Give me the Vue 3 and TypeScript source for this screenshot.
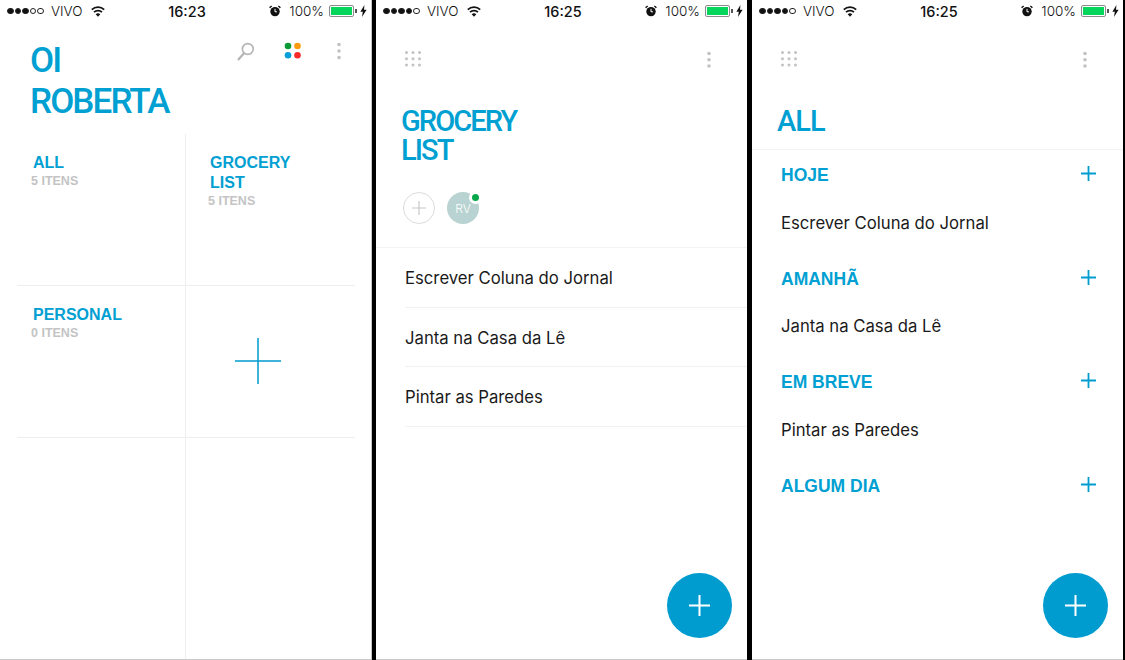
<script setup lang="ts">
type Screen = { kind: 'home' | 'list' | 'all'; time: string; signal: number }

const screens: Screen[] = [
  { kind: 'home', time: '16:23', signal: 3 },
  { kind: 'list', time: '16:25', signal: 4 },
  { kind: 'all', time: '16:25', signal: 4 }
]

const tasks = ['Escrever Coluna do Jornal', 'Janta na Casa da Lê', 'Pintar as Paredes']

const sections = [
  { title: 'HOJE', item: 'Escrever Coluna do Jornal' },
  { title: 'AMANHÃ', item: 'Janta na Casa da Lê' },
  { title: 'EM BREVE', item: 'Pintar as Paredes' },
  { title: 'ALGUM DIA', item: '' }
]

const gridDots = [0, 1, 2].flatMap((y) => [0, 1, 2].map((x) => ({ cx: 1.5 + x * 6.5, cy: 1.5 + y * 6.3 })))
</script>

<template>
  <div class="phones">
    <section v-for="s in screens" :key="s.kind" class="phone" :class="s.kind">
      <div class="status">
        <div class="status-left">
          <span class="signal">
            <i v-for="n in 5" :key="n" :class="{ on: n <= s.signal }"></i>
          </span>
          <span class="carrier">VIVO</span>
          <svg class="wifi" width="14" height="11" viewBox="0 0 14 11">
            <path d="M7 10.8 4.7 8.2a3.4 3.4 0 0 1 4.6 0z" fill="#111" />
            <path d="M3 6.2a5.8 5.8 0 0 1 8 0M.8 3.6a9 9 0 0 1 12.4 0" fill="none" stroke="#111" stroke-width="1.7" />
          </svg>
        </div>
        <span class="time">{{ s.time }}</span>
        <div class="status-right">
          <svg width="12" height="12" viewBox="0 0 12 12">
            <circle cx="6" cy="6.6" r="4.7" fill="#111" />
            <path d="M6 3.8v3h2" fill="none" stroke="#fff" stroke-width="1" />
            <path d="M.6 2.8 2.6 1M11.4 2.8 9.4 1" stroke="#111" stroke-width="1.4" />
          </svg>
          <span class="percent">100%</span>
          <span class="battery"><b></b></span>
          <svg width="7" height="12" viewBox="0 0 7 12">
            <path d="M4.4 0 .4 6.8h2.4L2 12l4.6-7.2H4z" fill="#111" />
          </svg>
        </div>
      </div>

      <template v-if="s.kind === 'home'">
        <header class="home-head">
          <h1 class="home-title">OI<br />ROBERTA</h1>
          <div class="home-icons">
            <svg width="18" height="19" viewBox="0 0 18 19">
              <circle cx="10.8" cy="7" r="5.4" fill="none" stroke="#b4b4b4" stroke-width="1.6" />
              <path d="M7.2 11 1 18" fill="none" stroke="#b4b4b4" stroke-width="2.2" />
            </svg>
            <svg width="18" height="18" viewBox="0 0 18 18">
              <circle cx="4" cy="4" r="3.3" fill="#0a9a34" />
              <circle cx="13.5" cy="4" r="3.3" fill="#fb9b0d" />
              <circle cx="4" cy="13.3" r="3.3" fill="#049fd8" />
              <circle cx="13.5" cy="13.3" r="3.3" fill="#fb2a2a" />
            </svg>
            <svg class="kebab home-kebab" width="6" height="18" viewBox="0 0 6 18">
              <circle cx="3" cy="2.5" r="1.8" />
              <circle cx="3" cy="9" r="1.8" />
              <circle cx="3" cy="15.6" r="1.8" />
            </svg>
          </div>
        </header>
        <div class="tiles">
          <div class="tile">
            <div class="tile-name">ALL</div>
            <div class="tile-count">5 ITENS</div>
          </div>
          <div class="tile">
            <div class="tile-name">GROCERY<br />LIST</div>
            <div class="tile-count">5 ITENS</div>
          </div>
          <div class="tile">
            <div class="tile-name">PERSONAL</div>
            <div class="tile-count">0 ITENS</div>
          </div>
          <div class="tile tile-add">
            <svg width="46" height="46" viewBox="0 0 46 46">
              <path d="M0 23h46M23 0v46" stroke="#009ccf" stroke-width="1.5" />
            </svg>
          </div>
          <div class="tile"></div>
          <div class="tile"></div>
        </div>
      </template>

      <template v-else>
        <div class="toolbar">
          <svg width="17" height="16" viewBox="0 0 17 16">
            <circle v-for="(d, i) in gridDots" :key="i" :cx="d.cx" :cy="d.cy" r="1.5" fill="#c2c2c2" />
          </svg>
          <svg class="kebab" width="6" height="18" viewBox="0 0 6 18">
            <circle cx="3" cy="2.5" r="1.8" />
            <circle cx="3" cy="8.8" r="1.8" />
            <circle cx="3" cy="15" r="1.8" />
          </svg>
        </div>

        <template v-if="s.kind === 'list'">
          <h1 class="list-title">GROCERY<br />LIST</h1>
          <div class="people">
            <span class="add-person">
              <svg width="14" height="14" viewBox="0 0 14 14">
                <path d="M0 7h14M7 0v14" stroke="#c8c8c8" stroke-width="1.2" />
              </svg>
            </span>
            <span class="avatar">RV<i class="online"></i></span>
          </div>
          <ul class="tasks">
            <li v-for="t in tasks" :key="t">{{ t }}</li>
          </ul>
        </template>

        <template v-else>
          <h1 class="all-title">ALL</h1>
          <div v-for="sec in sections" :key="sec.title" class="section">
            <div class="section-head">
              <span class="section-name">{{ sec.title }}</span>
              <svg width="15" height="15" viewBox="0 0 15 15">
                <path d="M0 7.5h15M7.5 0v15" stroke="#009ccf" stroke-width="1.8" />
              </svg>
            </div>
            <div v-if="sec.item" class="section-item">{{ sec.item }}</div>
          </div>
        </template>

        <button class="fab" type="button">
          <svg width="21" height="21" viewBox="0 0 21 21">
            <path d="M0 10.5h21M10.5 0v21" stroke="#fff" stroke-width="2" />
          </svg>
        </button>
      </template>
    </section>
  </div>
</template>

<style>
html,
body {
  margin: 0;
  background: #000;
}
</style>

<style scoped>
.phones {
  display: flex;
  width: 1125px;
  height: 660px;
  background: #000;
  overflow: hidden;
  font-family: "Liberation Sans", Arial, sans-serif;
}
.phone {
  position: relative;
  flex: none;
  width: 371px;
  height: 660px;
  box-sizing: border-box;
  background: #fff;
  display: flex;
  flex-direction: column;
  border-bottom: 1px solid #c9c9c9;
}
.phone.home { width: 372px; margin-right: 4px; border-right: 1px solid #c4c4c4; }
.phone.list { margin-right: 5px; }

.status {
  flex: none;
  height: 24px;
  display: grid;
  grid-template-columns: 1fr auto 1fr;
  align-items: center;
  padding: 0 4px 2px 7px;
  font-family: Inter, "Liberation Sans", sans-serif;
  font-size: 13.5px;
  color: #111;
  box-sizing: border-box;
}
.status-left,
.status-right {
  display: flex;
  align-items: center;
}
.status-right { justify-content: flex-end; }
.signal { display: flex; gap: 1px; }
.signal i {
  width: 6.6px;
  height: 6.6px;
  box-sizing: border-box;
  border: 0.7px solid #222;
  border-radius: 50%;
}
.signal i.on { background: #111; }
.carrier { margin-left: 7px; font-weight: 300; }
.wifi { margin-left: 9px; }
.time { font-size: 14.5px; font-weight: 500; }
.percent { margin: 0 5px 0 8px; font-weight: 300; }
.battery {
  display: block;
  position: relative;
  width: 25px;
  height: 12px;
  box-sizing: border-box;
  border: 1px solid #8c8c8c;
  border-radius: 2px;
  padding: 1px;
  margin-right: 6px;
}
.battery b {
  display: block;
  height: 100%;
  background: #07d65c;
}
.battery::after {
  content: "";
  position: absolute;
  right: -4px;
  top: 3px;
  width: 2px;
  height: 4px;
  background: #555;
}

.home-head {
  flex: none;
  height: 110px;
  display: flex;
  justify-content: space-between;
  padding: 16px 29px 0 30px;
  box-sizing: border-box;
}
h1 { margin: 0; color: #00a0d2; font-family: Roboto, sans-serif; font-weight: 500; }
.home-title {
  font-size: 35px;
  line-height: 41px;
  letter-spacing: -1.9px;
}
.home-icons {
  display: flex;
  gap: 29px;
  align-items: flex-start;
  padding-top: 2px;
}
.home-kebab { margin-left: 5px; }
.kebab { fill: #c2c2c2; }

.tiles {
  flex: 1;
  margin-left: 17px;
  width: 338px;
  display: grid;
  grid-template-columns: 169px 169px;
  grid-template-rows: 152px 152px 1fr;
}
.tile {
  box-sizing: border-box;
  padding: 19px 0 0 16px;
  border-bottom: 1px solid #eeeeee;
}
.tile:nth-child(odd) { border-right: 1px solid #eeeeee; }
.tile:nth-child(n + 5) { border-bottom: 0; }
.tile:nth-child(even) { padding-left: 24px; }
.tile-name {
  font-size: 16px;
  line-height: 20px;
  font-weight: 700;
  color: #00a0d2;
}
.tile-count {
  margin-left: -2px;
  font-size: 12.5px;
  line-height: 17px;
  font-weight: 700;
  color: #c4c4c4;
}
.tile.tile-add {
  display: flex;
  align-items: center;
  justify-content: center;
  padding: 0 26px 2px 0;
}

.toolbar {
  flex: none;
  height: 18px;
  margin-top: 27px;
  padding: 0 35px 0 29px;
  display: flex;
  justify-content: space-between;
  align-items: flex-start;
}
.list-title,
.all-title {
  font-size: 29px;
  line-height: 29px;
  letter-spacing: -1.9px;
  margin-top: 38px;
  padding-left: 25px;
}
.people {
  flex: none;
  margin-top: 27px;
  padding-left: 27px;
  display: flex;
  gap: 12px;
}
.add-person {
  width: 32px;
  height: 32px;
  box-sizing: border-box;
  border: 1.5px solid #dcdcdc;
  border-radius: 50%;
  display: flex;
  align-items: center;
  justify-content: center;
}
.avatar {
  position: relative;
  width: 32px;
  height: 32px;
  border-radius: 50%;
  background: #b8d3d1;
  color: #fff;
  font-family: Inter, sans-serif;
  font-size: 12px;
  font-weight: 300;
  display: flex;
  align-items: center;
  justify-content: center;
}
.online {
  position: absolute;
  top: -1.5px;
  right: -3px;
  width: 7px;
  height: 7px;
  border-radius: 50%;
  background: #08a84a;
  border: 3px solid #fff;
}
.tasks {
  list-style: none;
  margin: 23px 0 0;
  padding: 0;
  border-top: 1px solid #f3f3f3;
}
.tasks li {
  margin-left: 29px;
  height: 58.5px;
  line-height: 60px;
  border-bottom: 1px solid #f1f1f1;
  font-family: Inter, sans-serif;
  font-size: 16.7px;
  color: #1a1a1a;
}

.all-title {
  padding-bottom: 12.5px;
  border-bottom: 1px solid #f3f3f3;
  letter-spacing: -1px;
}
.section {
  padding: 0 27px 7.5px 29px;
}
.section-head {
  height: 48px;
  display: flex;
  align-items: center;
  justify-content: space-between;
  font-size: 17.5px;
  font-weight: 700;
  color: #00a0d2;
}
.section-name { padding-top: 4px; }
.section-item {
  height: 48px;
  line-height: 51px;
  font-family: Inter, sans-serif;
  font-size: 16.7px;
  color: #1a1a1a;
}

.fab {
  position: absolute;
  right: 15px;
  bottom: 21px;
  width: 65px;
  height: 65px;
  padding: 0;
  border: 0;
  border-radius: 50%;
  background: #009ccf;
  display: flex;
  align-items: center;
  justify-content: center;
}
</style>
